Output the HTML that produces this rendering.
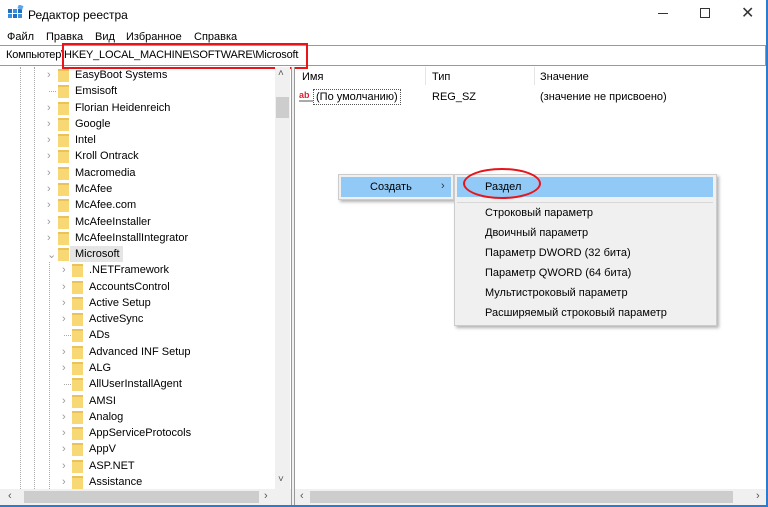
<!DOCTYPE html>
<html><head><meta charset="utf-8"><style>
*{margin:0;padding:0;box-sizing:border-box}
body{width:768px;height:507px;overflow:hidden;background:#fff;font-family:"Liberation Sans","Noto Sans CJK SC",sans-serif;font-size:11px;color:#000;position:relative}
.a{position:absolute;white-space:nowrap}
.win{position:absolute;left:0;top:0;width:768px;height:507px;border-right:2px solid #2b7bd0;border-bottom:2px solid #2b7bd0}
.fold{position:absolute;width:11px;height:13px;background:#f8d775;border-top:2px solid #e9c25a}
.arr{position:absolute;color:#999;font-size:11px}
.row{position:absolute;font-size:11px}
</style></head><body>
<div class="win"></div>
<svg class="a" style="left:8px;top:5px" width="16" height="16"><rect x="0" y="4" width="4" height="4" fill="#1e6fc4"/><rect x="5" y="4" width="4" height="4" fill="#3a8ee0"/><rect x="0" y="9" width="4" height="4" fill="#3a8ee0"/><rect x="5" y="9" width="4" height="4" fill="#1e6fc4"/><rect x="10" y="9" width="4" height="4" fill="#3a8ee0"/><rect x="10" y="4" width="4" height="4" fill="#1e6fc4"/><rect x="10" y="0" width="5" height="4" fill="#5aa6ee" transform="rotate(20 12 2)"/></svg>
<div class="a" style="left:28px;top:8px;font-size:12px">Редактор реестра</div>
<div class="a" style="left:658px;top:13px;width:10px;height:1px;background:#333"></div>
<div class="a" style="left:700px;top:8px;width:10px;height:10px;border:1px solid #333"></div>
<div class="a" style="left:741px;top:3px;font-size:16px;color:#333">✕</div>
<div class="a" style="left:7px;top:31px">Файл</div>
<div class="a" style="left:46px;top:31px">Правка</div>
<div class="a" style="left:95px;top:31px">Вид</div>
<div class="a" style="left:126px;top:31px">Избранное</div>
<div class="a" style="left:194px;top:31px">Справка</div>
<div class="a" style="left:0;top:45px;width:766px;height:21px;border-top:1px solid #999;border-bottom:1px solid #999;border-right:1px solid #999"></div>
<div class="a" style="left:6px;top:49px;letter-spacing:-0.2px">Компьютер\HKEY_LOCAL_MACHINE\SOFTWARE\Microsoft</div>
<div class="a" style="left:62px;top:43px;width:246px;height:26px;border:2px solid #e8141a"></div>
<div class="a" style="left:20px;top:67px;height:422px;border-left:1px dotted #aaa"></div>
<div class="a" style="left:34px;top:67px;height:422px;border-left:1px dotted #aaa"></div>
<div class="a" style="left:49px;top:262px;height:227px;border-left:1px dotted #aaa"></div>
<div class="a" style="left:275px;top:67px;width:15px;height:422px;background:#f0f0f0"></div>
<div class="a" style="left:278px;top:68px;color:#555;font-size:10px">˄</div>
<div class="a" style="left:276px;top:97px;width:13px;height:21px;background:#cdcdcd"></div>
<div class="a" style="left:278px;top:474px;color:#555;font-size:10px">˅</div>
<div class="a" style="left:291px;top:67px;width:4px;height:438px;border-left:1px solid #999;border-right:1px solid #999;background:#f0f0f0"></div>
<div class="a" style="left:0;top:489px;width:291px;height:16px;background:#f0f0f0"></div>
<div class="a" style="left:24px;top:491px;width:235px;height:12px;background:#cdcdcd"></div>
<div class="a" style="left:8px;top:490px;color:#555">‹</div>
<div class="a" style="left:264px;top:490px;color:#555">›</div>
<div id="tree"></div>
<div class="a" style="left:302px;top:71px">Имя</div>
<div class="a" style="left:425px;top:67px;height:18px;border-left:1px solid #e5e5e5"></div>
<div class="a" style="left:432px;top:71px">Тип</div>
<div class="a" style="left:534px;top:67px;height:18px;border-left:1px solid #e5e5e5"></div>
<div class="a" style="left:540px;top:71px">Значение</div>
<div class="a" style="left:299px;top:90px;width:14px;height:12px;color:#d23;font-size:9px;font-weight:bold;border-bottom:2px solid #aaa">ab</div>
<div class="a" style="left:313px;top:89px;height:16px;padding:1px 2px;border:1px dotted #555">(По умолчанию)</div>
<div class="a" style="left:432px;top:91px">REG_SZ</div>
<div class="a" style="left:540px;top:91px">(значение не присвоено)</div>
<div class="a" style="left:295px;top:489px;width:471px;height:16px;background:#f0f0f0"></div>
<div class="a" style="left:310px;top:491px;width:423px;height:12px;background:#cdcdcd"></div>
<div class="a" style="left:300px;top:490px;color:#555">‹</div>
<div class="a" style="left:756px;top:490px;color:#555">›</div>
<div class="a" style="left:338px;top:174px;width:116px;height:26px;background:#f0f0f0;border:1px solid #ccc;box-shadow:2px 2px 3px rgba(0,0,0,.3)"></div>
<div class="a" style="left:341px;top:177px;width:110px;height:20px;background:#91c9f7"></div>
<div class="a" style="left:370px;top:181px">Создать</div>
<div class="a" style="left:441px;top:180px;color:#333">›</div>
<div class="a" style="left:454px;top:174px;width:263px;height:152px;background:#f0f0f0;border:1px solid #ccc;box-shadow:2px 2px 3px rgba(0,0,0,.3)"></div>
<div class="a" style="left:457px;top:177px;width:256px;height:20px;background:#91c9f7"></div>
<div class="a" style="left:485px;top:181px">Раздел</div>
<div class="a" style="left:457px;top:202px;width:256px;border-top:1px solid #d7d7d7"></div>
<div class="a" style="left:485px;top:207px">Строковый параметр</div>
<div class="a" style="left:485px;top:227px">Двоичный параметр</div>
<div class="a" style="left:485px;top:247px">Параметр DWORD (32 бита)</div>
<div class="a" style="left:485px;top:267px">Параметр QWORD (64 бита)</div>
<div class="a" style="left:485px;top:287px">Мультистроковый параметр</div>
<div class="a" style="left:485px;top:307px">Расширяемый строковый параметр</div>
<div class="a" style="left:463px;top:168px;width:78px;height:31px;border:2px solid #e8141a;border-radius:50%"></div>
<script>
var L1=["EasyBoot Systems","Emsisoft","Florian Heidenreich","Google","Intel","Kroll Ontrack","Macromedia","McAfee","McAfee.com","McAfeeInstaller","McAfeeInstallIntegrator","Microsoft"];
var L2=[".NETFramework","AccountsControl","Active Setup","ActiveSync","ADs","Advanced INF Setup","ALG","AllUserInstallAgent","AMSI","Analog","AppServiceProtocols","AppV","ASP.NET","Assistance"];
var noArr1={"Emsisoft":1},noArr2={"ADs":1,"AllUserInstallAgent":1};
var h="";
function row(i,t,lv,noarr,sel){var y=68+i*16.28;var fx=lv?72:58,tx=lv?89:75,ax=lv?62:47;
if(sel)h+='<div class="a" style="left:70px;top:'+(y-1)+'px;width:53px;height:16px;background:#e5e5e5"></div>';
if(noarr)h+='<div class="a" style="left:'+(ax+2)+'px;top:'+(y+7)+'px;width:7px;border-top:1px dotted #aaa"></div>';
else h+='<div class="arr" style="left:'+ax+'px;top:'+(y+1)+'px">'+(t=="Microsoft"?"⌄":"›")+'</div>';
h+='<div class="fold" style="left:'+fx+'px;top:'+(y+1)+'px"></div><div class="row" style="left:'+tx+'px;top:'+(y+1)+'px">'+t+'</div>';}
L1.forEach(function(t,i){row(i,t,0,noArr1[t],t=="Microsoft")});
L2.forEach(function(t,i){row(i+12,t,1,noArr2[t])});
document.getElementById("tree").innerHTML=h;
</script>
</body></html>
